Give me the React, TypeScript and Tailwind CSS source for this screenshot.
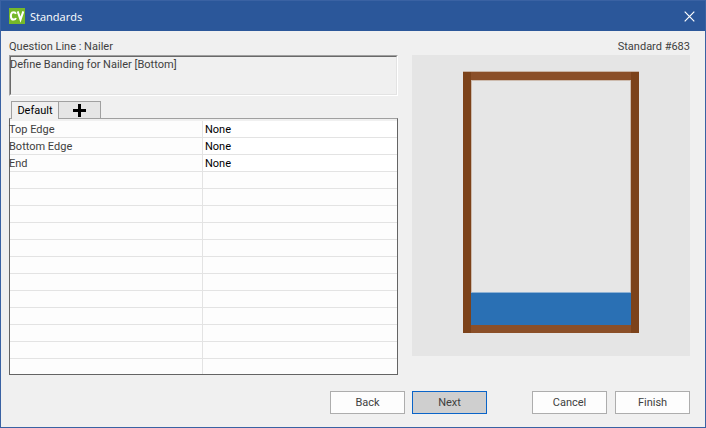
import { useState } from "react";

type Row = { label: string; value: string };

const ROWS: Row[] = [
  { label: "Top Edge", value: "None" },
  { label: "Bottom Edge", value: "None" },
  { label: "End", value: "None" },
];

const EMPTY_ROWS = 12;

function TitleBar() {
  return (
    <header className="flex h-[30px] items-center bg-[#2b579a] pl-2 pr-[10px]">
      <svg className="h-4 w-4 shrink-0" viewBox="0 0 16 16" aria-hidden="true">
        <rect width="16" height="16" fill="#76b82a" />
        <path d="M6.9 5.8A2.4 2.4 0 0 0 4.5 4.3C2.7 4.3 1.9 5.8 1.9 7.9s.8 3.7 2.6 3.7A2.4 2.4 0 0 0 6.9 10" fill="none" stroke="#fff" strokeWidth="2" />
        <path d="M8.7 3.4 11.5 11.6 14.3 3.4" fill="none" stroke="#fff" strokeWidth="2" />
      </svg>
      <h1 className="flex-1 pl-[5px] pt-px font-['Open_Sans',sans-serif] text-[11px] leading-4 text-white">Standards</h1>
      <button type="button" aria-label="Close" className="flex h-5 w-[11px] items-center justify-center">
        <svg className="h-[11px] w-[11px] shrink-0" viewBox="0 0 11 11" aria-hidden="true">
          <path d="M.7.7 10.3 10.3M10.3.7.7 10.3" stroke="#fff" strokeWidth="1.2" />
        </svg>
      </button>
    </header>
  );
}

function Tabs() {
  const [active, setActive] = useState(0);
  return (
    <div role="tablist" className="mt-[5px] flex h-[17px] pl-[2px]">
      <button
        type="button"
        role="tab"
        aria-selected={active === 0}
        onClick={() => setActive(0)}
        className="z-10 -mb-px w-12 border border-b-0 border-[#a0a0a0] bg-[#f0f0f0] text-[11px] leading-4 text-black"
      >
        Default
      </button>
      <button
        type="button"
        role="tab"
        aria-selected={active === 1}
        aria-label="Add"
        className="-ml-px flex w-[43px] items-center justify-center border border-b-0 border-[#a0a0a0] bg-[#e5e5e5]"
      >
        <svg className="h-[13px] w-[13px]" viewBox="0 0 13 13" aria-hidden="true">
          <path d="M5 0h3v5h5v3H8v5H5V8H0V5h5z" />
        </svg>
      </button>
    </div>
  );
}

function BandingTable() {
  return (
    <div className="border border-t-[#a0a0a0] border-x-[#646464] border-b-[#646464] bg-[#fdfdfd]">
      <div className="h-[2px] bg-[#f0f0f0]" />
      <table className="w-full table-fixed border-separate border-spacing-0 text-[11px] leading-[14px]">
        <tbody>
          {ROWS.map((row) => (
            <tr key={row.label} className="h-[17px]">
              <th scope="row" className="w-[193px] border-b border-r border-[#e3e3e3] p-0 pt-[2px] text-left font-normal text-[#404040]">
                <span className="-ml-px block">{row.label}</span>
              </th>
              <td className="border-b border-[#e3e3e3] bg-white p-0 pl-[2px] pt-[2px] text-black">{row.value}</td>
            </tr>
          ))}
          {Array.from({ length: EMPTY_ROWS }, (_, i) => (
            <tr key={i} className="h-[17px] last:h-[15px]">
              <td className={`border-r border-[#e3e3e3] p-0 ${i < EMPTY_ROWS - 1 ? "border-b" : ""}`} />
              <td className={`border-[#e3e3e3] p-0 ${i < EMPTY_ROWS - 1 ? "border-b" : ""}`} />
            </tr>
          ))}
        </tbody>
      </table>
    </div>
  );
}

function Preview() {
  return (
    <div className="flex h-[301px] justify-center bg-[#e5e5e5] pt-4">
      <svg className="h-[262px] w-[176px]" viewBox="0 0 176 262" role="img" aria-label="Cabinet preview">
        <rect x="0" y="0" width="176" height="262" fill="#c9b5a6" />
        <rect x="1" y="1" width="174" height="8" fill="#8b4f28" />
        <rect x="1" y="254" width="174" height="8" fill="#8b4f28" />
        <rect x="0" y="1" width="8" height="261" fill="#7c421a" />
        <rect x="168" y="1" width="8" height="261" fill="#7c421a" />
        <rect x="8" y="9" width="160" height="245" fill="#cdbbae" />
        <rect x="9" y="10" width="158" height="211" fill="#e6e6e6" />
        <rect x="8" y="221" width="160" height="1" fill="#8fb2d4" />
        <rect x="8" y="222" width="160" height="32" fill="#2a70b4" />
      </svg>
    </div>
  );
}

const BUTTON = "h-[23px] w-[75px] border text-[11px] leading-4 text-[#404040]";

export default function App() {
  return (
    <main className="flex min-h-screen flex-col border border-[#3a62a3] bg-[#f0f0f0] font-['Roboto',sans-serif] text-[11px] leading-4 text-[#404040]">
      <TitleBar />
      <div className="flex gap-[14px] pl-2 pr-[15px] pt-2">
        <section className="min-w-0 flex-1">
          <h2>Question Line : Nailer</h2>
          <div className="border border-b-white border-l-[#a0a0a0] border-r-white border-t-[#a0a0a0]">
            <p className="h-[39px] border border-b-[#e3e3e3] border-l-[#696969] border-r-[#e3e3e3] border-t-[#696969]">
              <span className="-ml-px block">Define Banding for Nailer [Bottom]</span>
            </p>
          </div>
          <Tabs />
          <BandingTable />
        </section>
        <section className="w-[278px] shrink-0">
          <p className="text-right">Standard #683</p>
          <Preview />
        </section>
      </div>
      <footer className="flex justify-end pr-[15px] pt-4">
        <button type="button" className={`${BUTTON} mr-[7px] border-[#adadad] bg-[#fdfdfd]`}>Back</button>
        <button type="button" className={`${BUTTON} mr-[45px] border-[#0a64c8] bg-[#cfcfcf]`}>Next</button>
        <button type="button" className={`${BUTTON} mr-2 border-[#adadad] bg-[#fdfdfd]`}>Cancel</button>
        <button type="button" className={`${BUTTON} border-[#adadad] bg-[#fdfdfd]`}>Finish</button>
      </footer>
    </main>
  );
}
